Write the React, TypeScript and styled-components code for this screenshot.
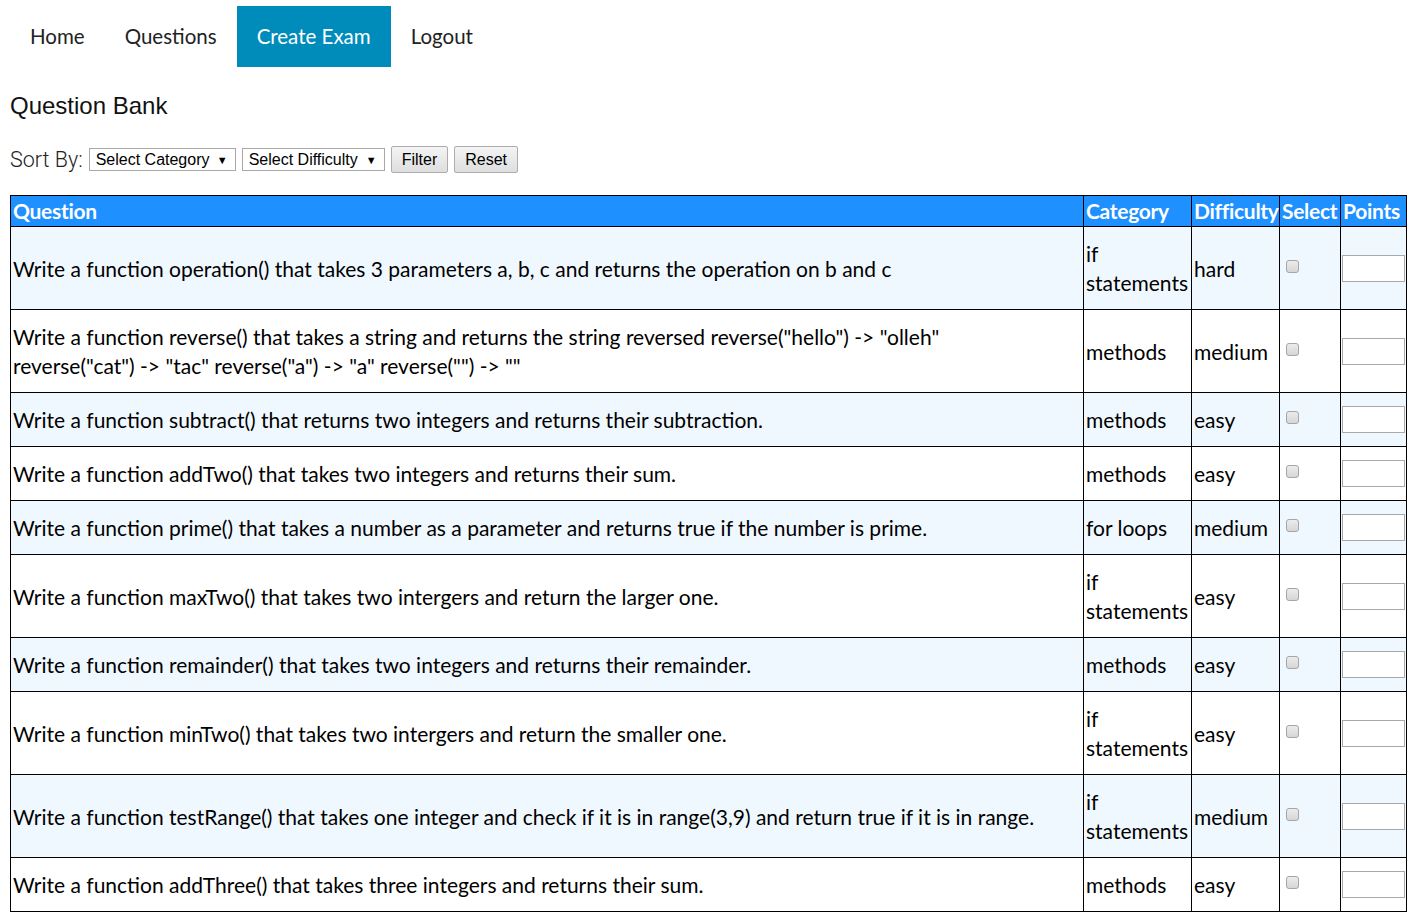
import React, { useState } from 'react';
import styled, { createGlobalStyle } from 'styled-components';

const GlobalStyle = createGlobalStyle`
  body {
    margin: 0;
    background: #fff;
    font-family: "Lato", "Noto Sans", sans-serif;
  }
`;

type Question = {
  text: React.ReactNode;
  category: string;
  difficulty: string;
};

const questions: Question[] = [
  { text: 'Write a function operation() that takes 3 parameters a, b, c and returns the operation on b and c', category: 'if statements', difficulty: 'hard' },
  {
    text: (
      <>
        Write a function reverse() that takes a string and returns the string reversed reverse("hello") -&gt; "olleh"
        <br />
        reverse("cat") -&gt; "tac" reverse("a") -&gt; "a" reverse("") -&gt; ""
      </>
    ),
    category: 'methods',
    difficulty: 'medium',
  },
  { text: 'Write a function subtract() that returns two integers and returns their subtraction.', category: 'methods', difficulty: 'easy' },
  { text: 'Write a function addTwo() that takes two integers and returns their sum.', category: 'methods', difficulty: 'easy' },
  { text: 'Write a function prime() that takes a number as a parameter and returns true if the number is prime.', category: 'for loops', difficulty: 'medium' },
  { text: 'Write a function maxTwo() that takes two intergers and return the larger one.', category: 'if statements', difficulty: 'easy' },
  { text: 'Write a function remainder() that takes two integers and returns their remainder.', category: 'methods', difficulty: 'easy' },
  { text: 'Write a function minTwo() that takes two intergers and return the smaller one.', category: 'if statements', difficulty: 'easy' },
  { text: 'Write a function testRange() that takes one integer and check if it is in range(3,9) and return true if it is in range.', category: 'if statements', difficulty: 'medium' },
  { text: 'Write a function addThree() that takes three integers and returns their sum.', category: 'methods', difficulty: 'easy' },
];

export default function App() {
  const [checked, setChecked] = useState<boolean[]>(questions.map(() => false));

  const toggle = (i: number) => {
    setChecked(prev => prev.map((c, j) => (j === i ? !c : c)));
  };

  return (
    <Page>
      <GlobalStyle />
      <Nav>
        <NavItem>Home</NavItem>
        <NavItem>Questions</NavItem>
        <NavItem $active>Create Exam</NavItem>
        <NavItem>Logout</NavItem>
      </Nav>

      <Title>Question Bank</Title>

      <Toolbar>
        <SortLabel>Sort By:</SortLabel>
        <SelectWrap>
          <Select defaultValue="">
            <option value="">Select Category</option>
            <option>if statements</option>
            <option>methods</option>
            <option>for loops</option>
          </Select>
        </SelectWrap>
        <SelectWrap>
          <Select defaultValue="">
            <option value="">Select Difficulty</option>
            <option>easy</option>
            <option>medium</option>
            <option>hard</option>
          </Select>
        </SelectWrap>
        <Button>Filter</Button>
        <Button>Reset</Button>
      </Toolbar>

      <Table>
        <colgroup>
          <col />
          <col style={{ width: 108 }} />
          <col style={{ width: 88 }} />
          <col style={{ width: 61 }} />
          <col style={{ width: 66 }} />
        </colgroup>
        <thead>
          <tr>
            <Th>Question</Th>
            <Th>Category</Th>
            <Th>Difficulty</Th>
            <Th>Select</Th>
            <Th>Points</Th>
          </tr>
        </thead>
        <tbody>
          {questions.map((q, i) => (
            <Row key={i} $shaded={i % 2 === 0}>
              <Td>{q.text}</Td>
              <Td>{q.category}</Td>
              <Td>{q.difficulty}</Td>
              <Td>
                <Check type="checkbox" checked={checked[i]} onChange={() => toggle(i)} />
              </Td>
              <Td>
                <PointsInput type="text" />
              </Td>
            </Row>
          ))}
        </tbody>
      </Table>
    </Page>
  );
}

const Page = styled.div`
  padding: 6px 10px 0;
`;

const Nav = styled.nav`
  display: flex;
  align-items: stretch;
`;

const NavItem = styled.a<{ $active?: boolean }>`
  display: block;
  padding: 20px;
  font-size: 20.5px;
  line-height: 21px;
  color: ${p => (p.$active ? '#ffffff' : '#222')};
  background: ${p => (p.$active ? '#008cba' : 'transparent')};
  cursor: pointer;
  text-decoration: none;
`;

const Title = styled.h2`
  margin: 25px 0 0;
  font-family: "Liberation Sans", Arial, sans-serif;
  font-weight: normal;
  font-size: 24px;
  line-height: 28px;
  color: #111;
`;

const Toolbar = styled.div`
  display: flex;
  align-items: center;
  gap: 6px;
  margin: 26px 0 22px;
  height: 27px;
`;

const SortLabel = styled.span`
  font-family: "Roboto", "Liberation Sans", sans-serif;
  font-weight: 300;
  font-size: 21.5px;
  color: #222;
`;

const SelectWrap = styled.div`
  position: relative;
  &::after {
    content: '▼';
    position: absolute;
    right: 8px;
    top: 50%;
    transform: translateY(-52%);
    font-size: 11px;
    color: #000;
    pointer-events: none;
  }
`;

const Select = styled.select`
  appearance: none;
  -webkit-appearance: none;
  font-family: "Liberation Sans", Arial, sans-serif;
  font-size: 16px;
  color: #000;
  background: #fff;
  border: 1px solid #a9a9a9;
  border-radius: 0;
  height: 23px;
  padding: 0 25px 0 6px;
  outline: none;
`;

const Button = styled.button`
  font-family: "Liberation Sans", Arial, sans-serif;
  font-size: 16px;
  color: #000;
  height: 27px;
  padding: 0 10px;
  border: 1px solid #adadad;
  border-radius: 2px;
  background: linear-gradient(#f4f4f4, #dedede);
  cursor: pointer;
`;

const Table = styled.table`
  width: 100%;
  border-collapse: collapse;
  table-layout: fixed;
  font-size: 21px;
  color: #000;
`;

const Th = styled.th`
  background: #1e90ff;
  color: #fff;
  font-weight: bold;
  text-align: left;
  line-height: 30px;
  padding: 0 2px;
  border: 1px solid #000;
  white-space: nowrap;
  overflow: hidden;
  letter-spacing: -0.3px;
`;

const Row = styled.tr<{ $shaded: boolean }>`
  background: ${p => (p.$shaded ? '#f0f8ff' : '#ffffff')};
`;

const Td = styled.td`
  border: 1px solid #000;
  padding: 12px 2px;
  line-height: 29px;
  vertical-align: middle;
  text-align: left;
`;

const Check = styled.input`
  display: block;
  appearance: none;
  -webkit-appearance: none;
  width: 13px;
  height: 13px;
  margin: 0 0 4px 4px;
  border: 1px solid #a6a6a6;
  border-radius: 3px;
  background: linear-gradient(#ececec, #d6d6d6);
  position: relative;
  &:checked::after {
    content: '✓';
    position: absolute;
    left: 1px;
    top: -3px;
    font-size: 11px;
    color: #333;
  }
`;

const PointsInput = styled.input`
  display: block;
  box-sizing: border-box;
  width: 63px;
  height: 27px;
  margin: 0 0 0 -1px;
  border: 1px solid #a9a9a9;
  background: #fff;
  font-size: 14px;
  padding: 1px 2px;
`;
